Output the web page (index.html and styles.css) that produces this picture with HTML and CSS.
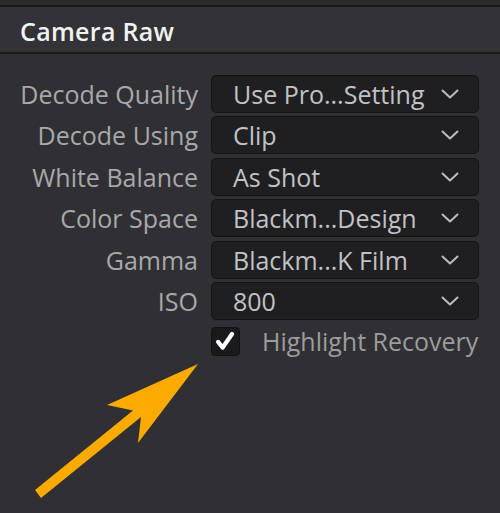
FILE: index.html
```html
<!DOCTYPE html>
<html>
<head>
<meta charset="utf-8">
<link rel="stylesheet" href="styles.css">
</head>
<body>
<div class="panel">
  <div class="topstrip"></div>
  <div class="header"><span class="title">Camera Raw</span></div>
  <div class="content">
    <div class="form">
      <div class="label">Decode Quality</div>
      <div class="select"><span>Use Pro...Setting</span><svg class="chev" viewBox="0 0 18 10"><path d="M1.5 1.5 L9 8.5 L16.5 1.5"/></svg></div>
      <div class="label">Decode Using</div>
      <div class="select"><span>Clip</span><svg class="chev" viewBox="0 0 18 10"><path d="M1.5 1.5 L9 8.5 L16.5 1.5"/></svg></div>
      <div class="label">White Balance</div>
      <div class="select"><span>As Shot</span><svg class="chev" viewBox="0 0 18 10"><path d="M1.5 1.5 L9 8.5 L16.5 1.5"/></svg></div>
      <div class="label">Color Space</div>
      <div class="select"><span>Blackm...Design</span><svg class="chev" viewBox="0 0 18 10"><path d="M1.5 1.5 L9 8.5 L16.5 1.5"/></svg></div>
      <div class="label">Gamma</div>
      <div class="select"><span>Blackm...K Film</span><svg class="chev" viewBox="0 0 18 10"><path d="M1.5 1.5 L9 8.5 L16.5 1.5"/></svg></div>
      <div class="label">ISO</div>
      <div class="select"><span>800</span><svg class="chev" viewBox="0 0 18 10"><path d="M1.5 1.5 L9 8.5 L16.5 1.5"/></svg></div>
      <div class="check-row">
        <div class="checkbox"><svg viewBox="0 0 29 29"><path d="M6.5 15 L11.5 21 L21.5 6.5"/></svg></div>
        <span class="check-label">Highlight Recovery</span>
      </div>
    </div>
  </div>
  <svg class="arrow" viewBox="0 0 500 513" width="500" height="513">
    <polygon points="35,490 133,410.5 107,405 198,364 138,443 141,417 41,498"/>
  </svg>
</div>
</body>
</html>
```
FILE: styles.css
```css
html, body {
  margin: 0;
  padding: 0;
}
body {
  width: 500px;
  height: 513px;
  overflow: hidden;
  background: #303034;
  font-family: "Open Sans", "Noto Sans", sans-serif;
}
.panel {
  position: relative;
  width: 500px;
  height: 513px;
  background: #303034;
}
.topstrip {
  height: 5px;
  background: #2b2b2f;
  border-bottom: 2px solid #1a1a1c;
}
.header {
  height: 45px;
  background: #333337;
  border-bottom: 2px solid #1c1c1e;
  display: flex;
  align-items: center;
  padding-left: 20px;
}
.title {
  color: #f2f2f2;
  font-size: 25px;
  font-weight: 600;
  letter-spacing: 0.3px;
  margin-top: 2px;
}
.content {
  padding: 21px 21px 0 0;
}
.form {
  display: grid;
  grid-template-columns: 198px 268px;
  column-gap: 13px;
  row-gap: 3.4px;
  grid-auto-rows: 38px;
}
.label {
  color: #a8a8aa;
  font-size: 25px;
  text-align: right;
  display: flex;
  align-items: center;
  justify-content: flex-end;
  white-space: nowrap;
}
.select {
  background: #1f1f22;
  border: 1px solid #141416;
  border-radius: 5px;
  box-sizing: border-box;
  display: flex;
  align-items: center;
  justify-content: space-between;
  padding: 0 19px 0 21px;
  color: #c2c2c4;
  font-size: 25px;
  white-space: nowrap;
}
.chev {
  width: 18px;
  height: 10px;
  flex: none;
  fill: none;
  stroke: #bdbdbf;
  stroke-width: 2;
  stroke-linecap: round;
  stroke-linejoin: round;
}
.check-row {
  grid-column: 2;
  align-self: start;
  height: 29px;
  display: flex;
  align-items: center;
  margin-top: 4px;
}
.checkbox {
  width: 29px;
  height: 29px;
  flex: none;
  background: #1a1a1c;
  border: 1px solid #121214;
  border-radius: 4px;
  box-sizing: border-box;
  display: flex;
  align-items: center;
  justify-content: center;
}
.checkbox svg {
  width: 27px;
  height: 27px;
  fill: none;
  stroke: #ffffff;
  stroke-width: 4.5;
  stroke-linecap: round;
  stroke-linejoin: round;
}
.check-label {
  margin-left: 22px;
  margin-top: -2px;
  color: #9c9c9e;
  font-size: 25px;
  white-space: nowrap;
}
.arrow {
  position: absolute;
  left: 0;
  top: 0;
  pointer-events: none;
}
.arrow polygon {
  fill: #fbaa00;
}
```
